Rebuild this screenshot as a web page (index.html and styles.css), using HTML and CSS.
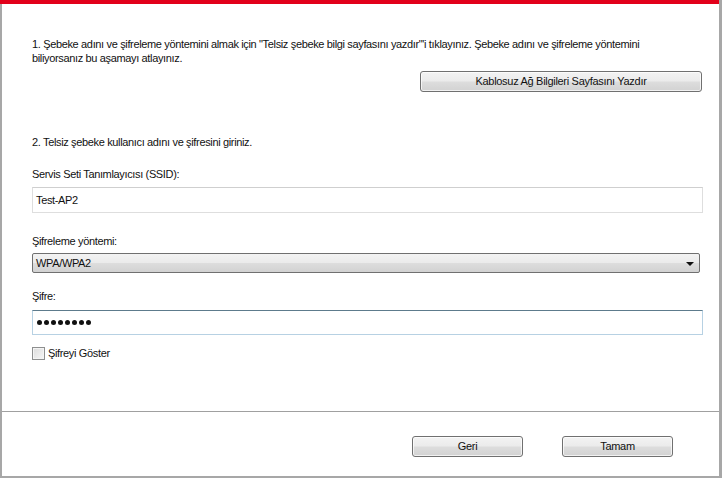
FILE: index.html
```html
<!DOCTYPE html>
<html lang="tr">
<head>
<meta charset="utf-8">
<title>Kablosuz Ağ Ayarları</title>
<link rel="stylesheet" href="styles.css">
</head>
<body>
<div class="window">
  <div class="topbar"></div>
  <div class="content">
    <p class="intro">1. Şebeke adını ve şifreleme yöntemini almak için "Telsiz şebeke bilgi sayfasını yazdır"'i tıklayınız. Şebeke adını ve şifreleme yöntemini<br>biliyorsanız bu aşamayı atlayınız.</p>
    <div class="print-row">
      <button class="btn btn-print">Kablosuz Ağ Bilgileri Sayfasını Yazdır</button>
    </div>
    <p class="step">2. Telsiz şebeke kullanıcı adını ve şifresini giriniz.</p>
    <div class="label label-ssid">Servis Seti Tanımlayıcısı (SSID):</div>
    <div class="input input-ssid">Test-AP2</div>
    <div class="label label-enc">Şifreleme yöntemi:</div>
    <div class="select">
      <span>WPA/WPA2</span>
      <span class="arrow"></span>
    </div>
    <div class="label label-pw">Şifre:</div>
    <div class="input input-pw">
      <span class="dot"></span><span class="dot"></span><span class="dot"></span><span class="dot"></span><span class="dot"></span><span class="dot"></span><span class="dot"></span><span class="dot"></span>
    </div>
    <div class="check-row">
      <span class="checkbox"></span>
      <span class="check-label">Şifreyi Göster</span>
    </div>
  </div>
  <div class="separator"></div>
  <div class="footer">
    <button class="btn btn-footer">Geri</button>
    <button class="btn btn-footer">Tamam</button>
  </div>
</div>
</body>
</html>
```

FILE: styles.css
```css
html, body {
  margin: 0;
  padding: 0;
  background: #ffffff;
}

body {
  font-family: "Liberation Sans", Arial, sans-serif;
  font-size: 11px;
  letter-spacing: -0.35px;
  line-height: 14px;
  color: #111111;
}

.window {
  width: 722px;
  height: 478px;
  box-sizing: border-box;
  border-left: 2px solid #a7a7a7;
  border-right: 3px solid #a7a7a7;
  border-bottom: 2px solid #a7a7a7;
  display: flex;
  flex-direction: column;
  background: #ffffff;
}

.topbar {
  height: 4px;
  background: #e2001a;
  margin-left: -2px;
  flex: none;
}

.content {
  flex: 1;
  display: flex;
  flex-direction: column;
  padding: 33px 16px 0 30px;
}

.intro {
  margin: 0;
  white-space: nowrap;
}

.print-row {
  display: flex;
  justify-content: flex-end;
  margin-top: 6px;
  padding-right: 1px;
}

.btn {
  font-family: inherit;
  font-size: 11px;
  letter-spacing: -0.3px;
  color: #111111;
  height: 21px;
  box-sizing: border-box;
  border: 1px solid #707070;
  border-radius: 3px;
  background: linear-gradient(to bottom, #f3f3f3 0%, #ebebeb 48%, #dddddd 52%, #d2d2d2 100%);
  padding: 0;
  line-height: 19px;
  box-shadow: inset 0 0 0 1px rgba(255, 255, 255, 0.7);
}

.btn-print {
  width: 282px;
}

.step {
  margin: 43px 0 0 0;
}

.label {
  height: 14px;
}

.label-ssid { margin-top: 18px; }
.label-enc { margin-top: 21px; }
.label-pw { margin-top: 16px; }

.input {
  box-sizing: border-box;
  height: 26px;
  border: 1px solid #dedede;
  border-top-color: #cfcfcf;
  padding: 0 3px;
  display: flex;
  align-items: center;
}

.input-ssid {
  margin-top: 6px;
}

.input-pw {
  margin-top: 7px;
  height: 25px;
  border-color: #b7d1e3;
  border-top-color: #5d7b8c;
  gap: 2px;
  padding-left: 4px;
}

.dot {
  width: 5px;
  height: 5px;
  border-radius: 50%;
  background: #111111;
  display: inline-block;
}

.select {
  margin-top: 5px;
  margin-right: 3px;
  box-sizing: border-box;
  height: 20px;
  border: 1px solid #707070;
  border-radius: 2px;
  background: linear-gradient(to bottom, #f3f3f3 0%, #ebebeb 48%, #dddddd 52%, #d2d2d2 100%);
  display: flex;
  align-items: center;
  justify-content: space-between;
  padding: 0 5px 0 3px;
}

.arrow {
  width: 0;
  height: 0;
  border-left: 4px solid transparent;
  border-right: 4px solid transparent;
  border-top: 4px solid #111111;
  margin-top: 1px;
}

.check-row {
  margin-top: 11px;
  display: flex;
  align-items: center;
  gap: 3px;
}

.checkbox {
  width: 13px;
  height: 13px;
  box-sizing: border-box;
  border: 1px solid #8e8f8f;
  background: linear-gradient(135deg, #dcdcdc 0%, #f6f6f6 100%);
  box-shadow: inset 0 0 0 1px #f4f4f4;
}

.separator {
  height: 1px;
  background: #a0a0a0;
  flex: none;
}

.footer {
  height: 64px;
  box-sizing: border-box;
  padding: 24px 46px 0 0;
  display: flex;
  justify-content: flex-end;
  align-items: flex-start;
  gap: 39px;
  flex: none;
}

.btn-footer {
  width: 111px;
}
```
